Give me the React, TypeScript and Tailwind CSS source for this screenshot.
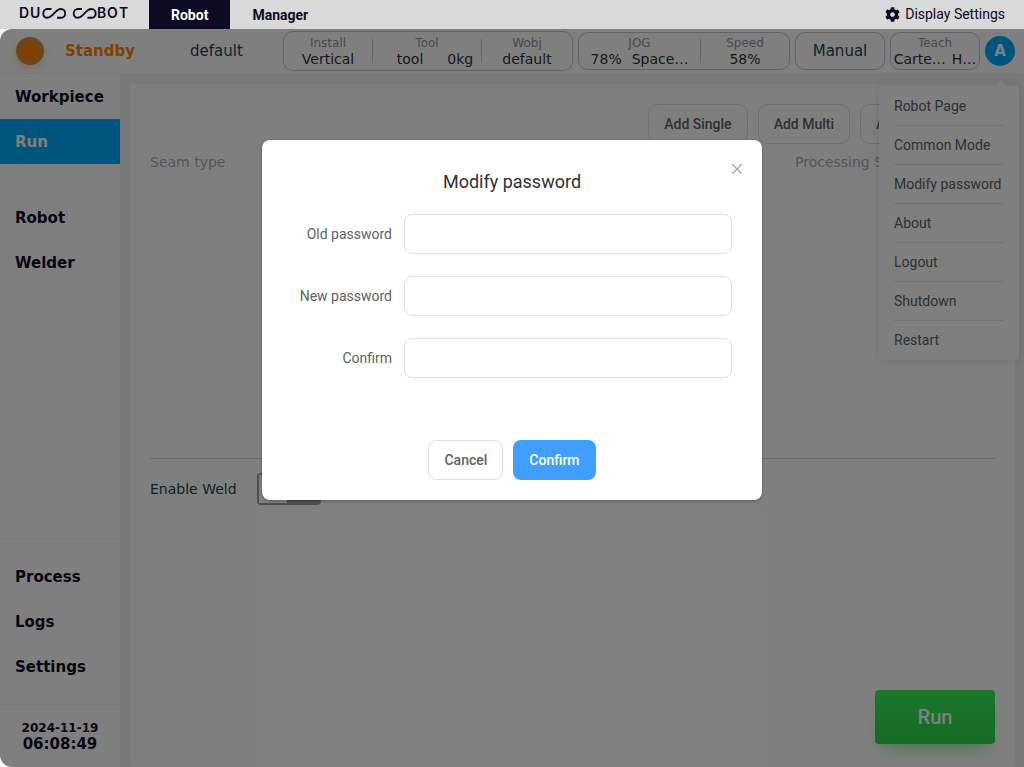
import { type ReactNode, useState } from "react";
import { clsx } from "clsx";
import { X } from "lucide-react";
import { FaCog } from "react-icons/fa";

const MENU = [
  "Robot Page",
  "Common Mode",
  "Modify password",
  "About",
  "Logout",
  "Shutdown",
  "Restart",
];

const FIELDS = [
  { id: "old", label: "Old password" },
  { id: "new", label: "New password" },
  { id: "confirm", label: "Confirm" },
];

function Logo() {
  return (
    <svg
      viewBox="0 0 112 29"
      className="ml-[19px] h-[29px] w-[112px] shrink-0 font-['Inter'] text-[14px] font-semibold"
      fill="#0d0a24"
      role="img"
      aria-label="DUCO COBOT"
    >
      <text x="0" y="18">D</text>
      <text x="11" y="18">U</text>
      {/* C running into the O, once per word */}
      <g fill="none" stroke="#0d0a24" strokeWidth="1.900">
        <path d="M32.500 9H28.400a4.200 4.400 0 0 0 0 8.800C34 17.800 36 9 41.800 9a4.400 4.400 0 0 1 0 8.800H38" />
        <path d="M63 9H58.900a4.200 4.400 0 0 0 0 8.800C64.500 17.800 66.500 9 72.300 9a4.400 4.400 0 0 1 0 8.800H68.500" />
      </g>
      <text x="78" y="18">B</text>
      <text x="88" y="18">O</text>
      <text x="100" y="18">T</text>
    </svg>
  );
}

function Stat({
  label,
  className,
  children,
}: {
  label: string;
  className?: string;
  children: ReactNode;
}) {
  return (
    <div className={clsx("flex flex-col items-center whitespace-nowrap", className)}>
      <span className="text-[12px] leading-4 text-[#909399]">{label}</span>
      <span className="flex text-[14px] leading-4 text-[#303133]">{children}</span>
    </div>
  );
}

function Divider() {
  return <span className="h-6 w-px shrink-0 bg-[#ccccd0]" />;
}

function Header() {
  const box = "flex shrink-0 items-center rounded-[10px] border border-[#c4c4c8]";
  return (
    <header className="flex h-[45px] shrink-0 items-center border-b border-[#f2f2f6] bg-white pr-[9px] text-[15px] text-[#2c3e50]">
      <span className="ml-4 flex size-7 shrink-0 items-center justify-center rounded-full bg-[#d09050] shadow-[0_4px_8px_rgba(255,128,0,0.3)]">
        <span className="size-4 rounded-full bg-[#ff8000] shadow-[0_0_5px_2px_#ff8000]" />
      </span>
      <span className="ml-[21px] font-bold text-[#ff8000]">Standby</span>
      <span className="ml-[55px]">default</span>

      <div className="ml-auto flex items-center gap-[5px]">
        <div className={clsx(box, "h-10")}>
          <Stat label="Install" className="w-[88px]">Vertical</Stat>
          <Divider />
          <Stat label="Tool" className="w-[108px]">
            <span className="ml-4">tool</span>
            <span className="ml-6">0kg</span>
          </Stat>
          <Divider />
          <Stat label="Wobj" className="w-[90px]">default</Stat>
        </div>
        <div className={clsx(box, "h-[38px]")}>
          <Stat label="JOG" className="w-[121px]">
            <span>78%</span>
            <span className="ml-[10px]">Space…</span>
          </Stat>
          <Divider />
          <Stat label="Speed" className="w-[88px]">58%</Stat>
        </div>
        <button className={clsx(box, "h-[38px] w-[90px] justify-center")}>Manual</button>
        <div className={clsx(box, "h-[38px] w-[90px] justify-center")}>
          <Stat label="Teach">
            <span>Carte…</span>
            <span className="ml-[6px]">H…</span>
          </Stat>
        </div>
        <button className="size-[30px] rounded-full bg-[#00aaff] text-[15px] font-bold text-white">
          A
        </button>
      </div>
    </header>
  );
}

function NavGroup({ items, active }: { items: string[]; active?: string }) {
  return (
    <div>
      {items.map((item) => (
        <a
          key={item}
          href="#"
          className={clsx(
            "flex h-[45px] items-center pl-[15px] pt-[2px]",
            item === active && "bg-[#00aaff] text-white",
          )}
        >
          {item}
        </a>
      ))}
    </div>
  );
}

function Sidebar() {
  return (
    <nav className="flex w-[120px] shrink-0 flex-col bg-white text-[15px] font-bold text-[#0d0a24]">
      <div className="border-b border-[#f2f2f6] pb-[15px]">
        <NavGroup items={["Workpiece", "Run"]} active="Run" />
      </div>
      <div className="flex-1 pt-[15px]">
        <NavGroup items={["Robot", "Welder"]} />
      </div>
      <div className="border-y border-[#f2f2f6] py-[15px]">
        <NavGroup items={["Process", "Logs", "Settings"]} />
      </div>
      <div className="flex h-[62px] flex-col items-center justify-center leading-4">
        <span className="text-[12px]">2024-11-19</span>
        <span>06:08:49</span>
      </div>
    </nav>
  );
}

function Workspace() {
  const btn =
    "h-10 rounded-[10px] border border-[#dcdce6] px-[15px] font-['Roboto'] text-[14px] font-medium text-[#606266]";
  return (
    <main className="ml-[10px] mr-[9px] mt-[10px] flex flex-1 flex-col rounded bg-white px-5 pt-5 text-[14px]">
      <div className="flex justify-end gap-[10px]">
        <button className={btn}>Add Single</button>
        <button className={btn}>Add Multi</button>
        <button className={clsx(btn, "w-[135px] text-left")}>Add</button>
      </div>
      <div className="h-[315px] border-b border-[#d4d4d8]">
        <table className="w-full table-fixed">
          <thead>
            <tr className="h-9 text-left text-[#a8abb2]">
              <th className="font-normal">Seam type</th>
              <th className="w-[200px] whitespace-nowrap font-normal">Processing State</th>
            </tr>
          </thead>
        </table>
      </div>
      <label className="flex items-center gap-5 pt-[14px] text-[#2c3e50]">
        Enable Weld
        <input type="checkbox" className="peer sr-only" />
        <span className="flex h-8 w-16 rounded-sm border-2 border-[#9c9ca4] bg-[#9c9ca4]">
          <span className="w-7 bg-white" />
        </span>
      </label>
      <button className="mb-[23px] ml-auto mt-auto h-[54px] w-[120px] rounded bg-linear-to-b from-[#35ee55] to-[#2cd84a] font-['Roboto'] text-[20px] font-medium text-white shadow-[0_12px_16px_-8px_rgba(44,216,74,0.5)]">
        Run
      </button>
    </main>
  );
}

function UserMenu() {
  return (
    <div className="absolute right-[5px] top-[57px] w-[140px] rounded bg-white px-[15px] font-['Roboto'] text-[14px] text-[#606266] shadow-[0_0_12px_rgba(0,0,0,0.12)]">
      <span className="absolute -top-1 right-[14px] size-[9px] rotate-45 bg-white" />
      <ul className="relative pt-px">
        {MENU.map((item) => (
          <li key={item} className="border-b border-[#e4e6ec] last:border-transparent">
            <button className="flex h-[38px] items-center whitespace-nowrap">{item}</button>
          </li>
        ))}
      </ul>
    </div>
  );
}

function PasswordDialog({ onClose }: { onClose: () => void }) {
  return (
    <div className="absolute inset-0 flex items-start justify-center bg-black/50 pt-[111px] font-['Roboto'] text-[14px] text-[#606266]">
      <form
        role="dialog"
        aria-labelledby="dialog-title"
        className="relative w-[500px] max-w-full rounded-lg bg-white px-[30px] pb-5 pt-[30px] shadow-[0_1px_3px_rgba(0,0,0,0.3)]"
        onSubmit={(e) => e.preventDefault()}
      >
        <button
          type="button"
          aria-label="Close"
          onClick={onClose}
          className="absolute right-4 top-5 text-[#a0a3a9]"
        >
          <X size={18} strokeWidth={1.5} />
        </button>
        <h2 id="dialog-title" className="text-center text-[18px] leading-6 text-[#303133]">
          Modify password
        </h2>
        <div className="mt-5 flex flex-col gap-[22px]">
          {FIELDS.map((f) => (
            <div key={f.id} className="flex items-center gap-3">
              <label htmlFor={f.id} className="w-[100px] text-right">
                {f.label}
              </label>
              <input
                id={f.id}
                type="password"
                className="h-10 min-w-0 flex-1 rounded-lg border border-[#dcdfe6] px-3"
              />
            </div>
          ))}
        </div>
        <div className="mt-[62px] flex justify-center gap-[10px] font-medium">
          <button
            type="button"
            onClick={onClose}
            className="h-10 rounded-lg border border-[#dcdfe6] px-[15px]"
          >
            Cancel
          </button>
          <button className="h-10 rounded-lg bg-[#409eff] px-4 text-white">Confirm</button>
        </div>
      </form>
    </div>
  );
}

export default function App() {
  const [open, setOpen] = useState(true);

  return (
    <div className="flex min-h-screen flex-col bg-white font-['DejaVu_Sans',sans-serif]">
      <div className="flex h-[29px] shrink-0 items-center bg-[#d9d9d9] font-['Roboto'] text-[14px] text-[#0d0a24]">
        <Logo />
        <nav className="ml-[18px] flex h-full font-bold">
          <a href="#" className="flex items-center bg-[#0d0a24] px-[22px] pt-px text-white">
            Robot
          </a>
          <a href="#" className="flex items-center px-[22px] pt-px">
            Manager
          </a>
        </nav>
        <button className="ml-auto mr-[19px] flex items-center gap-[5px]">
          <FaCog size={15} />
          Display Settings
        </button>
      </div>

      <div className="relative flex flex-1 flex-col overflow-hidden rounded-l-xl bg-[#f2f2f6]">
        <Header />
        <div className="flex flex-1">
          <Sidebar />
          <Workspace />
        </div>
        <UserMenu />
        {open && <PasswordDialog onClose={() => setOpen(false)} />}
      </div>
    </div>
  );
}
